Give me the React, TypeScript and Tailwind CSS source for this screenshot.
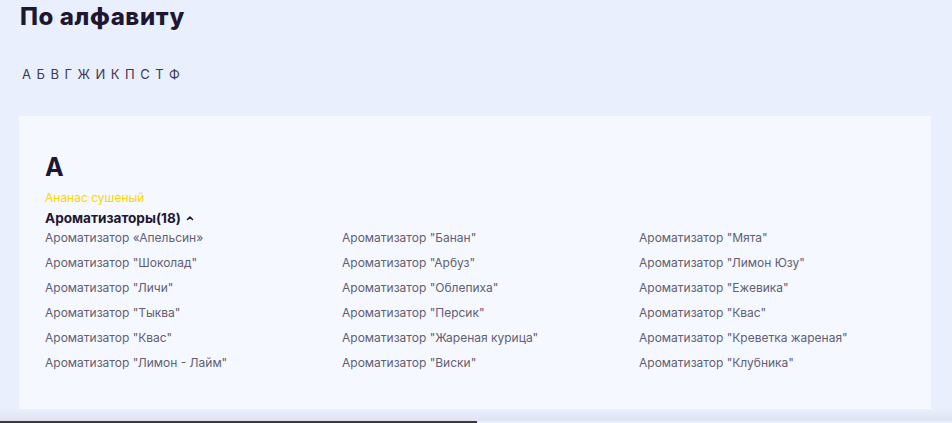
import React from "react";

const items: string[][] = [
  [
    "Ароматизатор «Апельсин»",
    'Ароматизатор "Шоколад"',
    'Ароматизатор "Личи"',
    'Ароматизатор "Тыква"',
    'Ароматизатор "Квас"',
    'Ароматизатор "Лимон - Лайм"',
  ],
  [
    'Ароматизатор "Банан"',
    'Ароматизатор "Арбуз"',
    'Ароматизатор "Облепиха"',
    'Ароматизатор "Персик"',
    'Ароматизатор "Жареная курица"',
    'Ароматизатор "Виски"',
  ],
  [
    'Ароматизатор "Мята"',
    'Ароматизатор "Лимон Юзу"',
    'Ароматизатор "Ежевика"',
    'Ароматизатор "Квас"',
    'Ароматизатор "Креветка жареная"',
    'Ароматизатор "Клубника"',
  ],
];

const letters = ["А", "Б", "В", "Г", "Ж", "И", "К", "П", "С", "Т", "Ф"];

export default function App() {
  return (
    <div
      className="relative w-[952px] h-[423px] overflow-hidden bg-[#eaeffd]"
      style={{ fontFamily: "Inter, 'Noto Sans', sans-serif" }}
    >
      <div className="pl-[20px] pt-[2px]">
        <h1 className="text-[24px] leading-[30px] font-extrabold text-[#1e1733] tracking-[0.6px]">
          По алфавиту
        </h1>
        <div className="mt-[34px] ml-[2px] flex gap-[5.5px] text-[13px] leading-[16px] text-[#3c3852]">
          {letters.map((l) => (
            <span key={l}>{l}</span>
          ))}
        </div>
      </div>
      <div className="ml-[19px] mt-[34px] w-[912px] h-[293px] bg-[#f5f8fe] pl-[26px] pt-[36px]">
        <div className="text-[25px] leading-[30px] font-bold text-[#1e1733]">А</div>
        <div className="mt-[9px] text-[12px] leading-[14px] text-[#ffd600]">Ананас сушеный</div>
        <div className="mt-[5px] flex items-center gap-[5px] text-[13.6px] leading-[16px] font-bold text-[#1e1733]">
          <span>Ароматизаторы(18)</span>
          <svg width="8" height="6" viewBox="0 0 8 6" fill="none">
            <path d="M1.5 4.5L4 2L6.5 4.5" stroke="#1e1733" strokeWidth="1.6" strokeLinecap="round" strokeLinejoin="round" />
          </svg>
        </div>
        <div className="mt-[4px] grid grid-cols-[297px_297px_297px]">
          {items.map((col, ci) => (
            <div key={ci} className="flex flex-col">
              {col.map((t, i) => (
                <div key={i} className="h-[25px] leading-[16px] text-[12px] text-[#625e74]">
                  {t}
                </div>
              ))}
            </div>
          ))}
        </div>
      </div>
      <div className="absolute left-0 bottom-[2px] w-full h-[12px] bg-gradient-to-b from-transparent to-[#dfe3f1]" />
      <div className="absolute left-0 bottom-0 w-[477px] h-[2px] bg-[#3a3a3a]" />
    </div>
  );
}
